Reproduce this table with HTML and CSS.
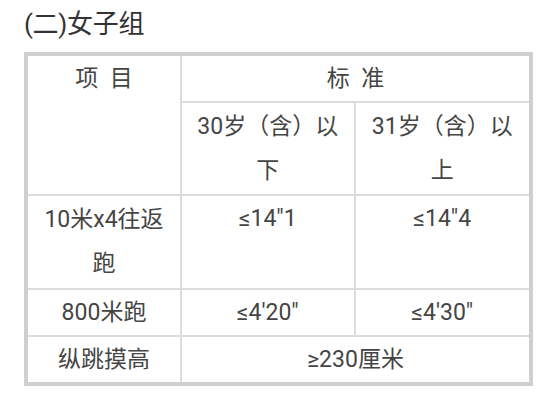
FILE: index.html
```html
<!DOCTYPE html>
<html lang="zh">
<head>
<meta charset="utf-8">
<link rel="stylesheet" href="styles.css">
</head>
<body>
<div class="page">
  <h2 class="title">(二)女子组</h2>
  <table class="std">
    <tr class="r1">
      <td class="c1 rs" rowspan="2">项&nbsp;&nbsp;目</td>
      <td class="last" colspan="2">标&nbsp;&nbsp;准</td>
    </tr>
    <tr class="r2">
      <td class="c2">30岁（含）以下</td>
      <td class="c3 last">31岁（含）以上</td>
    </tr>
    <tr class="r3">
      <td class="c1">10米x4往返跑</td>
      <td class="c2 top">≤14"1</td>
      <td class="c3 last top">≤14"4</td>
    </tr>
    <tr class="r4">
      <td class="c1">800米跑</td>
      <td class="c2">≤4'20"</td>
      <td class="c3 last">≤4'30"</td>
    </tr>
    <tr class="r5 bottom">
      <td class="c1">纵跳摸高</td>
      <td class="last" colspan="2">≥230厘米</td>
    </tr>
  </table>
</div>
</body>
</html>
```

FILE: styles.css
```css
html, body {
  margin: 0;
  padding: 0;
  background: #ffffff;
}

.page {
  padding: 8px 0 0 24px;
  font-family: "Roboto", "Noto Sans CJK SC", sans-serif;
  color: #444444;
}

.title {
  margin: 0;
  font-size: 26px;
  font-weight: normal;
  line-height: 32px;
  height: 32px;
  color: #333333;
  letter-spacing: -0.3px;
}

.std {
  margin-top: 12px;
  width: 509px;
  border: 4px solid #cfcfcf;
  border-collapse: separate;
  border-spacing: 0;
  table-layout: fixed;
  font-size: 23px;
  color: #454545;
}

.std td {
  padding: 0 8px;
  text-align: center;
  vertical-align: middle;
  line-height: 44px;
  border-right: 2px solid #dcdcdc;
  border-bottom: 2px solid #dcdcdc;
}

.std td.last {
  border-right: none;
}

.std tr.bottom td {
  border-bottom: none;
}

.std td.rs,
.std td.top {
  vertical-align: top;
}

.std td.top {
  padding-top: 1px;
}

.c1 { width: 136px; }
.c2 { width: 156px; }
.c3 { width: 157px; }

.r1 td { height: 45px; }
.r2 td { height: 91px; }
.r3 td { height: 91px; }
.r4 td { height: 45px; }
.r5 td { height: 45px; }
.std td.rs { line-height: 45px; }
```
